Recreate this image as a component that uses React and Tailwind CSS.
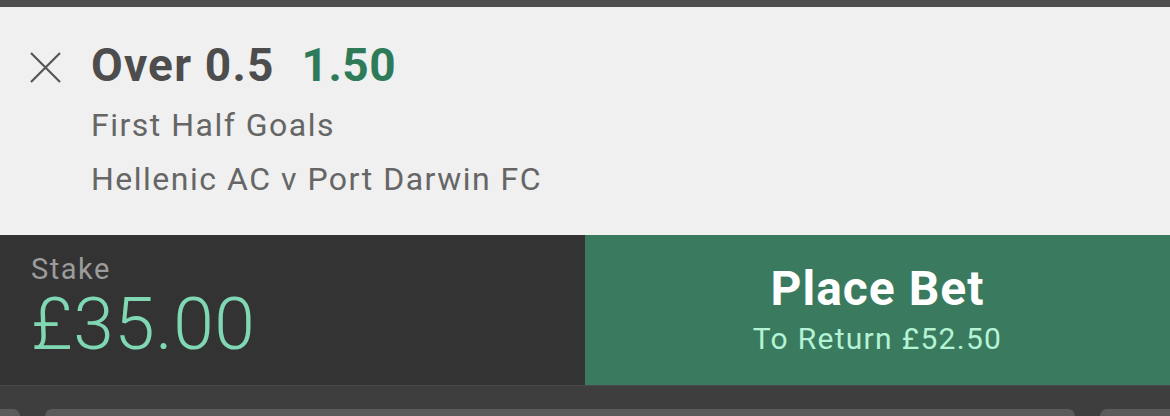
export default function App() {
  return (
    <div
      className="w-[1170px] h-[416px] overflow-hidden flex flex-col bg-[#3e3e3e]"
      style={{ fontFamily: "Roboto, 'Liberation Sans', sans-serif" }}
    >
      <div className="h-[7px] bg-[#4f4f4f]" />

      <div className="h-[228px] bg-[#f0f0f0] flex pt-[30px]">
        <div className="w-[91px] pl-[30px] pt-[15px]">
          <svg width="31" height="31" viewBox="0 0 31 31" fill="none" stroke="#555555" strokeWidth="2.2">
            <path d="M1 1 L30 30 M30 1 L1 30" />
          </svg>
        </div>
        <div className="flex flex-col">
          <div className="flex items-baseline text-[46px] leading-[56px] font-bold tracking-[1.2px]">
            <span className="text-[#4d4d4d]">Over 0.5</span>
            <span className="ml-[27px] text-[#2f7b59] tracking-[0.5px]">1.50</span>
          </div>
          <div className="mt-[5px] text-[32px] leading-[54px] tracking-[1.5px] text-[#666666]">First Half Goals</div>
          <div className="text-[32px] leading-[54px] tracking-[1.5px] text-[#666666]">Hellenic AC v Port Darwin FC</div>
        </div>
      </div>

      <div className="h-[150px] flex">
        <div className="w-[585px] bg-[#333333] pl-[31px] pt-[20px] flex flex-col">
          <div className="text-[29px] leading-none tracking-[1.5px] text-[#9c9c9c]">Stake</div>
          <div className="mt-[4px] text-[73px] leading-none font-light tracking-[0.5px] text-[#7fd8b3]">£35.00</div>
        </div>
        <div className="flex-1 bg-[#3a7a5e] pt-[30px] flex flex-col items-center">
          <div className="text-[48px] leading-none font-bold tracking-[1px] text-white">Place Bet</div>
          <div className="mt-[11px] text-[30px] leading-none tracking-[1.3px] text-[#b4f3d6]">To Return £52.50</div>
        </div>
      </div>

      <div className="flex-1 border-t border-[#4a4a4a] flex items-end gap-[25px] pt-[23px]">
        <div className="w-[20px] h-full bg-[#5b5b5b] rounded-tr-[14px]" />
        <div className="w-[1030px] h-full bg-[#5b5b5b] rounded-t-[14px]" />
        <div className="flex-1 h-full bg-[#5b5b5b] rounded-tl-[14px]" />
      </div>
    </div>
  );
}
